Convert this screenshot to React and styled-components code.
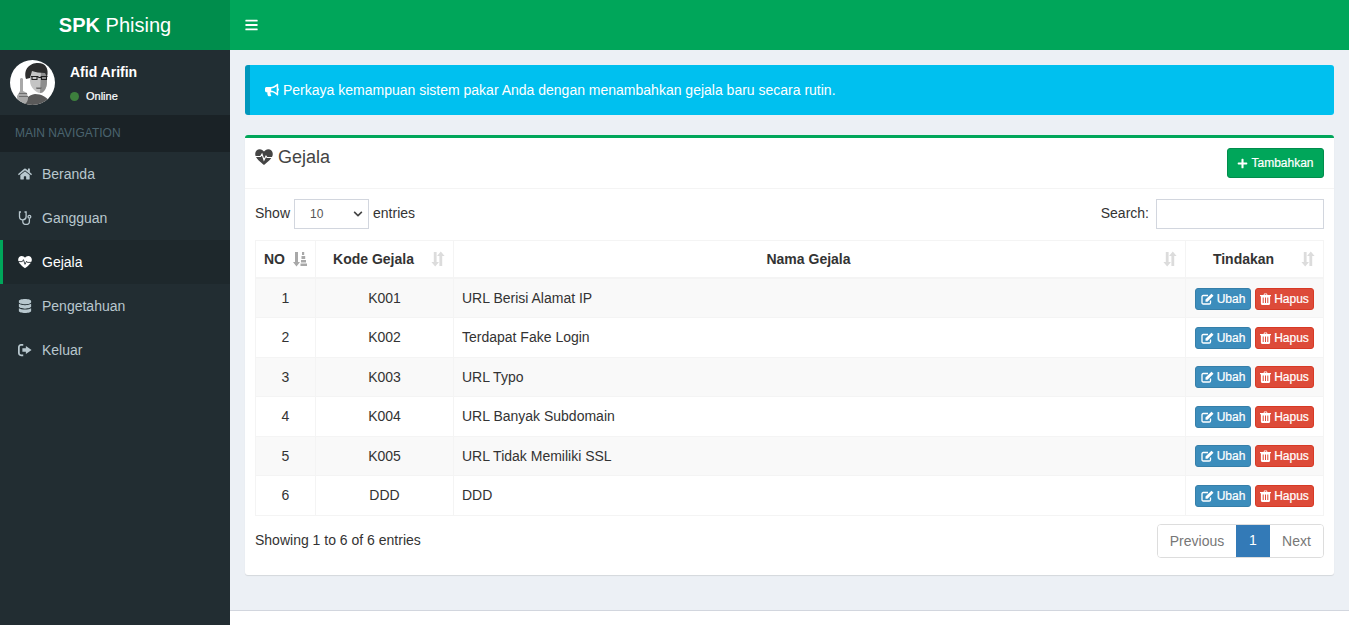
import React from "react";
import styled, { createGlobalStyle } from "styled-components";
import { FaBars, FaHome, FaDatabase, FaBullhorn, FaPlus, FaChevronDown } from "react-icons/fa";

const Global = createGlobalStyle`
  html, body { margin: 0; padding: 0; height: 625px; overflow: hidden; }
  body { font-family: "Liberation Sans", Arial, sans-serif; font-size: 14px; line-height: 20px; color: #333; background: #222d32; }
  * { box-sizing: border-box; }
`;

const Shell = styled.div`display: grid; grid-template-columns: 230px 1fr; height: 625px;`;
const Side = styled.aside`background: #222d32; display: flex; flex-direction: column;`;
const Logo = styled.div`height: 50px; background: #008d4c; color: #fff; font-size: 20px; line-height: 50px; text-align: center; font-weight: 300; b { font-weight: 700; }`;
const User = styled.div`height: 65px; padding: 10px; display: flex; gap: 15px;`;
const Avatar = styled.svg`width: 45px; height: 45px; border-radius: 50%; flex: none; display: block;`;
const UserInfo = styled.div`display: flex; flex-direction: column; padding-top: 5px; color: #fff;`;
const UserName = styled.div`font-weight: 700; font-size: 14px; line-height: 14px;`;
const Status = styled.div`display: flex; align-items: center; gap: 6px; font-size: 11px; line-height: 14px; margin-top: 10px; -webkit-text-stroke: 0.2px #fff;`;
const Dot = styled.span`width: 9px; height: 9px; border-radius: 50%; background: #3d7f3d; margin-right: 1px;`;
const NavHead = styled.div`height: 37px; background: #1a2226; color: #4b646f; font-size: 12px; line-height: 36px; padding-left: 15px;`;
const NavItem = styled.div`
  height: 44px; display: flex; align-items: center; padding-left: ${p => (p.$active ? 15 : 18)}px;
  color: ${p => (p.$active ? "#fff" : "#b8c7ce")};
  background: ${p => (p.$active ? "#1e282c" : "transparent")};
  border-left: ${p => (p.$active ? "3px solid #00a65a" : "0")};
  svg { width: 14px; height: 14px; flex: none; }
  span { margin-left: 10px; }
`;
const Main = styled.main`background: #ecf0f5; display: flex; flex-direction: column; min-width: 0;`;
const Topbar = styled.header`height: 50px; background: #00a65a; color: #fff; display: flex; align-items: center; padding-left: 15px; svg { width: 13px; height: 14px; }`;
const Content = styled.div`padding: 15px; flex: 1;`;
const Alert = styled.div`height: 50px; background: #00c0ef; color: #fff; border-left: 5px solid #0097bc; border-radius: 3px; padding: 0 15px; display: flex; align-items: center; margin-bottom: 20px; svg { width: 14px; height: 14px; margin-right: 4px; }`;
const Box = styled.section`height: 440px; background: #fff; border-top: 3px solid #00a65a; border-radius: 3px; box-shadow: 0 1px 1px rgba(0,0,0,.1);`;
const BoxHead = styled.div`height: 51px; padding: 10px; display: flex; justify-content: space-between; border-bottom: 1px solid #f4f4f4;`;
const Title = styled.h3`margin: 0; font-size: 18px; font-weight: 400; line-height: 18px; color: #444; display: flex; align-items: center; gap: 5px; height: 18px; svg { width: 18px; height: 16px; }`;
const AddBtn = styled.button`width: 97px; height: 30px; background: #00a65a; border: 1px solid #008d4c; border-radius: 3px; color: #fff; font: 400 12px/18px "Liberation Sans", sans-serif; -webkit-text-stroke: 0.2px #fff; display: flex; align-items: center; justify-content: center; gap: 3px; padding: 0; svg { width: 11px; height: 11px; }`;
const BoxBody = styled.div`padding: 10px;`;
const Controls = styled.div`height: 30px; display: flex; justify-content: space-between; align-items: flex-start; margin-bottom: 11px;`;
const Label = styled.div`display: flex; align-items: flex-start; gap: 4px; color: #333; line-height: 28px;`;
const FakeSelect = styled.div`width: 75px; height: 30px; border: 1px solid #d2d6de; padding-left: 15px; font-size: 12px; color: #555; display: flex; align-items: center; justify-content: space-between; padding-right: 5px; background: #fff; svg { width: 10px; height: 10px; color: #444; }`;
const SearchInput = styled.input`width: 168px; height: 30px; border: 1px solid #d2d6de; outline: 0; margin-left: 3px; padding: 0 8px; background: #fff;`;
const Table = styled.table`width: 100%; border-collapse: collapse; table-layout: fixed; border: 1px solid #f4f4f4;`;
const Th = styled.th`
  height: 37.5px; padding: 0 8px; border: 1px solid #f4f4f4; border-bottom: 2px solid #f4f4f4; position: relative; text-align: center; font-weight: 700; color: #333; padding-right: 30px;
  svg { position: absolute; right: 8px; top: 10px; width: 14px; height: 16px; }
`;
const Tr = styled.tr`background: ${p => (p.$odd ? "#f9f9f9" : "#fff")};`;
const Td = styled.td`height: 39.5px; padding: 0 8px; border: 1px solid #f4f4f4; text-align: ${p => p.$align || "center"}; color: #333;`;
const Actions = styled.div`display: flex; justify-content: center; gap: 4px; margin-top: 1px;`;
const ActBtn = styled.button`
  height: 22px; width: ${p => p.$w}px; padding: 0; border-radius: 3px; color: #fff; font: 400 12px/18px "Liberation Sans", sans-serif; -webkit-text-stroke: 0.2px #fff;
  background: ${p => p.$bg}; border: 1px solid ${p => p.$bd}; display: flex; align-items: center; justify-content: center; gap: 3px;
  svg { width: ${p => p.$icon}px; height: 12px; flex: none; }
`;
const Foot = styled.div`display: flex; justify-content: space-between; align-items: flex-start; margin-top: 8.5px;`;
const Info = styled.div`padding-top: 6px; color: #333;`;
const Pager = styled.div`display: flex; height: 34px; border: 1px solid #ddd; border-radius: 4px; overflow: hidden;`;
const Page = styled.div`padding: 6px 0; color: ${p => (p.$on ? "#fff" : "#777")}; background: ${p => (p.$on ? "#337ab7" : "#fff")}; line-height: 20px; margin: ${p => (p.$on ? "-1px 0" : "0")}; height: ${p => (p.$on ? "34px" : "auto")}; width: ${p => p.$w}px; text-align: center;`;
const Footer = styled.footer`height: 15px; background: #fff; border-top: 1px solid #d2d6de;`;

const SortBoth = () => (
  <svg viewBox="0 0 14 16" fill="#dcdcdc"><path d="M2.800 1h2.800v10H8l-3.800 4.500L.4 11h2.400zM8.400 15V5H6l3.800-4.500L13.600 5h-2.400v10z" /></svg>
);
const SortAsc = () => (
  <svg viewBox="0 0 14 16" fill="#a8a8a8"><path d="M2 1h3v10h2L3.500 15.500 0 11h2zM9 1h2.200v3H9zM8.500 5h3.700v3H8.500zM8 9h5v2.500H8zM7.500 12.500H14V15H7.500z" /></svg>
);
const SignOut = () => (
  <svg viewBox="0 0 16 14" fill="currentColor"><path d="M6 2H3.500C2.700 2 2 2.700 2 3.500v7C2 11.300 2.700 12 3.500 12H6v2H3.500C1.600 14 0 12.400 0 10.500v-7C0 1.600 1.600 0 3.500 0H6zM9 2.500 15.500 7 9 11.500V9H5V5h4z" /></svg>
);
const Stethoscope = () => (
  <svg viewBox="0 0 14 14" fill="none" stroke="currentColor" strokeWidth="1.300">
    <path d="M3 1H1.500v4.500a3.300 3.300 0 0 0 6.600 0V1H6.500M4.800 9v1.200a3.300 3.300 0 0 0 6.600 0V7.500" />
    <circle cx="11.400" cy="5.800" r="1.400" />
  </svg>
);
const Heartbeat = ({ line }) => (
  <svg viewBox="0 0 18 16">
    <path d="M9 16C6 13.500.2 9.500.2 5 .2 2 2.300.2 4.800.2 6.600.2 8 1.100 9 2.600 10 1.100 11.400.2 13.200.2 15.700.2 17.800 2 17.800 5c0 4.500-5.800 8.500-8.800 11z" fill="currentColor" />
    <path d="M0 7.500h5.500l1.500-2.500 2 6 2-4 1 1.500H18" fill="none" stroke={line} strokeWidth="1.100" />
  </svg>
);
const EditIcon = () => (
  <svg viewBox="0 0 13 12">
    <path d="M9.500 7.500V9.800c0 .7-.5 1.200-1.200 1.200H2.200C1.500 11 1 10.500 1 9.800V3.700C1 3 1.500 2.500 2.200 2.500H7" fill="none" stroke="currentColor" strokeWidth="1.300" />
    <path d="M4.500 6.500 10.500.8 12.500 2.800 6.500 8.700H4.500z" fill="currentColor" />
  </svg>
);
const TrashIcon = () => (
  <svg viewBox="0 0 11 12">
    <path fillRule="evenodd" d="M3.500 2 4.200.4h2.600L7.500 2H11v1.200h-.9v7.400c0 .8-.5 1.400-1.100 1.400H2c-.6 0-1.100-.6-1.100-1.400V3.200H0V2zM4.500 2h2l-.3-.7H4.800zM2.700 4.500v5.500h1V4.500zM5 4.500v5.500h1V4.500zM7.300 4.500v5.500h1V4.500z" fill="currentColor" />
  </svg>
);

const rows = [
  ["1", "K001", "URL Berisi Alamat IP"],
  ["2", "K002", "Terdapat Fake Login"],
  ["3", "K003", "URL Typo"],
  ["4", "K004", "URL Banyak Subdomain"],
  ["5", "K005", "URL Tidak Memiliki SSL"],
  ["6", "DDD", "DDD"],
];

const nav = [
  ["Beranda", <FaHome />],
  ["Gangguan", <Stethoscope />],
  ["Gejala", <Heartbeat line="#1e282c" />, true],
  ["Pengetahuan", <FaDatabase />],
  ["Keluar", <SignOut />],
];

export default function App() {
  return (
    <Shell>
      <Global />
      <Side>
        <Logo><b>SPK</b> Phising</Logo>
        <User>
          <Avatar viewBox="0 0 45 45">
            <rect width="45" height="45" fill="#fff" />
            <path d="M14 45c0-6 5-10 11-11 6 0 13 3 17 11z" fill="#5a5a5a" />
            <path d="M20 10h17v12c0 6-3 11-7 11s-10-6-10-12z" fill="#c4c4c4" />
            <path d="M31 12h6v10c0 6-3 11-7 11z" fill="#8e8e8e" />
            <path d="M16 19C13 9 20 3 28 3s11 6 9 14l-2-4c-5 0-10-1-13-2l-2 7z" fill="#2e2e2e" />
            <path d="M21 16.500h6.500l1.500 1h1.500l1-1h6M22 17v2.500h5V17M31.500 17v2.500h5V17" fill="none" stroke="#1f1f1f" strokeWidth="1.100" />
            <path d="M26 27.500h6l-1 1.500h-4.500z" fill="#6a6a6a" />
            <path d="M10 19c.5-1.500 2.500-1.500 3 0v12l4 2 1 5c0 4-3 7-6 7-3-1-5-4-5-9l3-5z" fill="#a8a8a8" />
            <path d="M9 33h8v1H9zM9 36h9v1H9z" fill="#6f6f6f" />
          </Avatar>
          <UserInfo>
            <UserName>Afid Arifin</UserName>
            <Status><Dot />Online</Status>
          </UserInfo>
        </User>
        <NavHead>MAIN NAVIGATION</NavHead>
        {nav.map(([label, icon, active]) => (
          <NavItem key={label} $active={active}>{icon}<span>{label}</span></NavItem>
        ))}
      </Side>
      <Main>
        <Topbar><FaBars /></Topbar>
        <Content>
          <Alert><FaBullhorn />Perkaya kemampuan sistem pakar Anda dengan menambahkan gejala baru secara rutin.</Alert>
          <Box>
            <BoxHead>
              <Title><Heartbeat line="#fff" />Gejala</Title>
              <AddBtn><FaPlus />Tambahkan</AddBtn>
            </BoxHead>
            <BoxBody>
              <Controls>
                <Label>Show <FakeSelect>10<FaChevronDown /></FakeSelect> entries</Label>
                <Label>Search: <SearchInput /></Label>
              </Controls>
              <Table>
                <colgroup>
                  <col style={{ width: 60 }} />
                  <col style={{ width: 138 }} />
                  <col />
                  <col style={{ width: 138 }} />
                </colgroup>
                <thead>
                  <tr>
                    <Th>NO<SortAsc /></Th>
                    <Th>Kode Gejala<SortBoth /></Th>
                    <Th>Nama Gejala<SortBoth /></Th>
                    <Th>Tindakan<SortBoth /></Th>
                  </tr>
                </thead>
                <tbody>
                  {rows.map((r, i) => (
                    <Tr key={r[0]} $odd={i % 2 === 0}>
                      <Td>{r[0]}</Td>
                      <Td>{r[1]}</Td>
                      <Td $align="left">{r[2]}</Td>
                      <Td>
                        <Actions>
                          <ActBtn $w={56} $icon={13} $bg="#3c8dbc" $bd="#367fa9"><EditIcon />Ubah</ActBtn>
                          <ActBtn $w={59} $icon={11} $bg="#dd4b39" $bd="#d73925"><TrashIcon />Hapus</ActBtn>
                        </Actions>
                      </Td>
                    </Tr>
                  ))}
                </tbody>
              </Table>
              <Foot>
                <Info>Showing 1 to 6 of 6 entries</Info>
                <Pager>
                  <Page $w={78}>Previous</Page>
                  <Page $on $w={34}>1</Page>
                  <Page $w={53}>Next</Page>
                </Pager>
              </Foot>
            </BoxBody>
          </Box>
        </Content>
        <Footer />
      </Main>
    </Shell>
  );
}
